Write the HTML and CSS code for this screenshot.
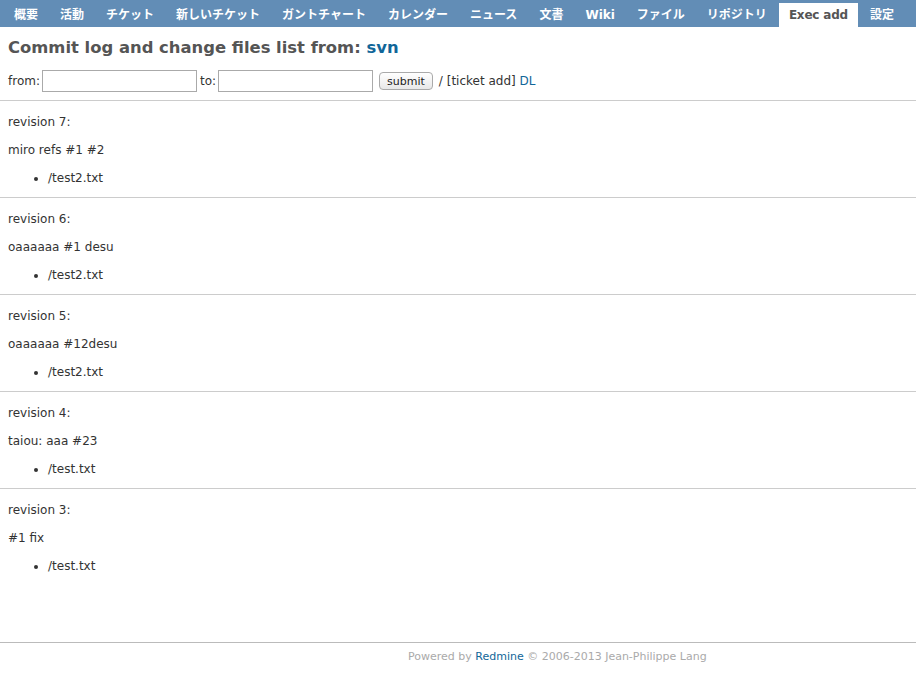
FILE: index.html
```html
<!DOCTYPE html>
<html>
<head>
<meta charset="utf-8">
<link rel="stylesheet" href="styles.css">
</head>
<body>
<div class="menu">
  <a class="item">概要</a>
  <a class="item">活動</a>
  <a class="item">チケット</a>
  <a class="item">新しいチケット</a>
  <a class="item">ガントチャート</a>
  <a class="item">カレンダー</a>
  <a class="item">ニュース</a>
  <a class="item">文書</a>
  <a class="item">Wiki</a>
  <a class="item">ファイル</a>
  <a class="item">リポジトリ</a>
  <a class="item selected">Exec add</a>
  <a class="item">設定</a>
</div>
<div class="content">
  <h2 class="title">Commit log and change files list from: <a class="link">svn</a></h2>
  <form class="range">
    <label>from:</label><input class="field" type="text">
    <label class="to">to:</label><input class="field" type="text">
    <button class="btn" type="button">submit</button>
    <span class="tail">/ [ticket add] <a class="link">DL</a></span>
  </form>
</div>
<div class="revisions">
  <div class="rev">
    <p class="line">revision 7:</p>
    <p class="line">miro refs #1 #2</p>
    <ul class="files"><li>/test2.txt</li></ul>
  </div>
  <div class="rev">
    <p class="line">revision 6:</p>
    <p class="line">oaaaaaa #1 desu</p>
    <ul class="files"><li>/test2.txt</li></ul>
  </div>
  <div class="rev">
    <p class="line">revision 5:</p>
    <p class="line">oaaaaaa #12desu</p>
    <ul class="files"><li>/test2.txt</li></ul>
  </div>
  <div class="rev">
    <p class="line">revision 4:</p>
    <p class="line">taiou: aaa #23</p>
    <ul class="files"><li>/test.txt</li></ul>
  </div>
  <div class="rev last">
    <p class="line">revision 3:</p>
    <p class="line">#1 fix</p>
    <ul class="files"><li>/test.txt</li></ul>
  </div>
</div>
<div class="footer">
  Powered by <a class="link">Redmine</a> © 2006-2013 Jean-Philippe Lang
</div>
</body>
</html>
```
FILE: styles.css
```css
html, body {
  margin: 0;
  padding: 0;
  background: #fff;
}
body {
  font-family: "DejaVu Sans", Verdana, sans-serif;
  font-size: 12px;
  color: #333;
  width: 916px;
  height: 674px;
  display: flex;
  flex-direction: column;
}
.menu {
  background: #628db6;
  height: 27px;
  display: flex;
  align-items: flex-end;
  padding-left: 4px;
}
.item {
  color: #fff;
  font-weight: bold;
  font-size: 12px;
  padding: 0 10px;
  margin-right: 2px;
  height: 24px;
  line-height: 25px;
  font-family: "DejaVu Sans", "Noto Sans CJK JP", sans-serif;
  white-space: nowrap;
}
.selected {
  background: #fff;
  color: #555;
  letter-spacing: -0.2px;
}
.content {
  padding: 0 8px;
}
.title {
  margin: 9px 0 0 0;
  font-size: 16.4px;
  line-height: 24px;
  color: #555;
  font-weight: bold;
}
.link {
  color: #169;
  text-decoration: none;
}
.range {
  margin: 9px 0 0 0;
  display: flex;
  align-items: center;
  height: 24px;
  font-size: 12px;
}
.field {
  width: 151px;
  height: 18px;
  border: 1px solid #aaa;
  padding: 1px;
  margin: 0 0 0 2px;
}
.to {
  margin-left: 3px;
}
.btn {
  margin-left: 6px;
  height: 18px;
  padding: 0 7px;
  font-family: "DejaVu Sans", sans-serif;
  font-size: 11px;
  border: 1px solid #aaa;
  border-radius: 4px;
  background: linear-gradient(#fff, #e8e8e8);
  color: #222;
}
.tail {
  margin-left: 6px;
}
.revisions {
  margin-top: 7px;
  border-top: 1px solid #ccc;
}
.rev {
  border-bottom: 1px solid #ccc;
  padding: 13px 8px 11px 8px;
}
.rev.last {
  border-bottom: none;
}
.line {
  margin: 0 0 12px 0;
  line-height: 16px;
}
.files {
  margin: 0;
  padding-left: 40px;
  line-height: 16px;
}
.footer {
  margin-top: auto;
  border-top: 1px solid #bbb;
  height: 32px;
  line-height: 28px;
  font-size: 11px;
  color: #aaa;
  padding-left: 408px;
  box-sizing: border-box;
}
```
